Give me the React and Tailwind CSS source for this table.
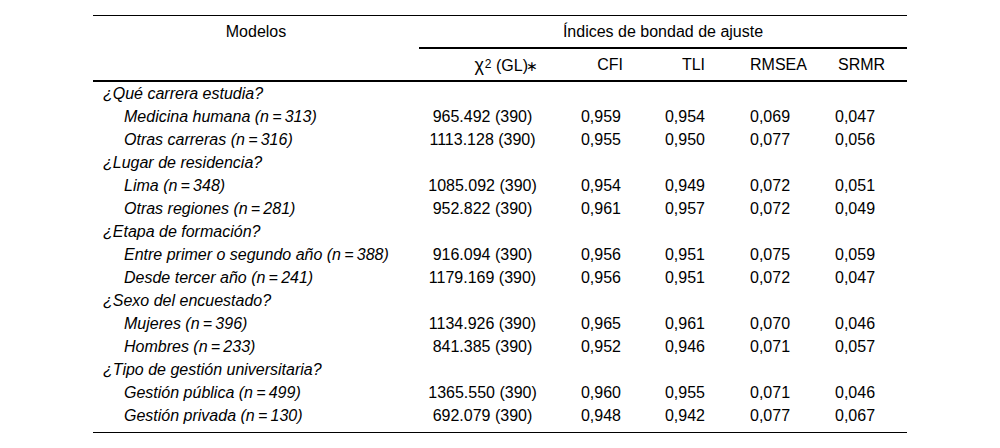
import React from 'react';

const cols = 'grid grid-cols-[326px_127px_94px_90px_90px_87px]';

const groups = [
  {
    title: '¿Qué carrera estudia?',
    rows: [
      ['Medicina humana', '313', '965.492 (390)', '0,959', '0,954', '0,069', '0,047'],
      ['Otras carreras', '316', '1113.128 (390)', '0,955', '0,950', '0,077', '0,056'],
    ],
  },
  {
    title: '¿Lugar de residencia?',
    rows: [
      ['Lima', '348', '1085.092 (390)', '0,954', '0,949', '0,072', '0,051'],
      ['Otras regiones', '281', '952.822 (390)', '0,961', '0,957', '0,072', '0,049'],
    ],
  },
  {
    title: '¿Etapa de formación?',
    rows: [
      ['Entre primer o segundo año', '388', '916.094 (390)', '0,956', '0,951', '0,075', '0,059'],
      ['Desde tercer año', '241', '1179.169 (390)', '0,956', '0,951', '0,072', '0,047'],
    ],
  },
  {
    title: '¿Sexo del encuestado?',
    rows: [
      ['Mujeres', '396', '1134.926 (390)', '0,965', '0,961', '0,070', '0,046'],
      ['Hombres', '233', '841.385 (390)', '0,952', '0,946', '0,071', '0,057'],
    ],
  },
  {
    title: '¿Tipo de gestión universitaria?',
    rows: [
      ['Gestión pública', '499', '1365.550 (390)', '0,960', '0,955', '0,071', '0,046'],
      ['Gestión privada', '130', '692.079 (390)', '0,948', '0,942', '0,077', '0,067'],
    ],
  },
];

function DataRow({ row }) {
  const [label, n, chi, cfi, tli, rmsea, srmr] = row;
  return (
    <div className={`${cols} h-[23px] items-center`}>
      <div className="pl-[31px] italic whitespace-nowrap">
        {label} (n{'\u2009'}={'\u2009'}{n})
      </div>
      <div className="text-center">{chi}</div>
      <div className="text-right pr-[19px]">{cfi}</div>
      <div className="text-right pr-[25px]">{tli}</div>
      <div className="pl-[20px]">{rmsea}</div>
      <div className="pl-[15px]">{srmr}</div>
    </div>
  );
}

export default function App() {
  return (
    <div className="w-[1000px] h-[448px] bg-white pt-[15px] pl-[93px] text-black text-[16px] leading-none font-['Liberation_Sans',Arial,sans-serif]">
      <div className="w-[814px] border-t border-black">
        {/* Header */}
        <div className="border-b-2 border-black">
          <div className={cols}>
            <div className="h-[33px] border-b-2 border-transparent flex items-center justify-center">
              Modelos
            </div>
            <div className="col-span-5 h-[33px] border-b-2 border-black flex items-center justify-center">
              Índices de bondad de ajuste
            </div>
          </div>
          <div className={`${cols} h-[31px] items-center`}>
            <div />
            <div className="text-right pr-[8px] whitespace-nowrap">
              <span className="text-[18px]">χ</span><sup className="text-[12px] relative -top-[3px] ml-[1px]">2</sup> (GL)<span className="text-[14px] -ml-[2px]">∗</span>
            </div>
            <div className="text-right pr-[17px]">CFI</div>
            <div className="text-right pr-[25px]">TLI</div>
            <div className="pl-[20px]">RMSEA</div>
            <div className="pl-[18px]">SRMR</div>
          </div>
        </div>

        {/* Body */}
        <div className="pb-[5px] border-b border-black">
          {groups.map(g => (
            <React.Fragment key={g.title}>
              <div className="h-[23px] flex items-center pl-[10px] italic">{g.title}</div>
              {g.rows.map(r => (
                <DataRow key={r[0]} row={r} />
              ))}
            </React.Fragment>
          ))}
        </div>
      </div>
    </div>
  );
}
